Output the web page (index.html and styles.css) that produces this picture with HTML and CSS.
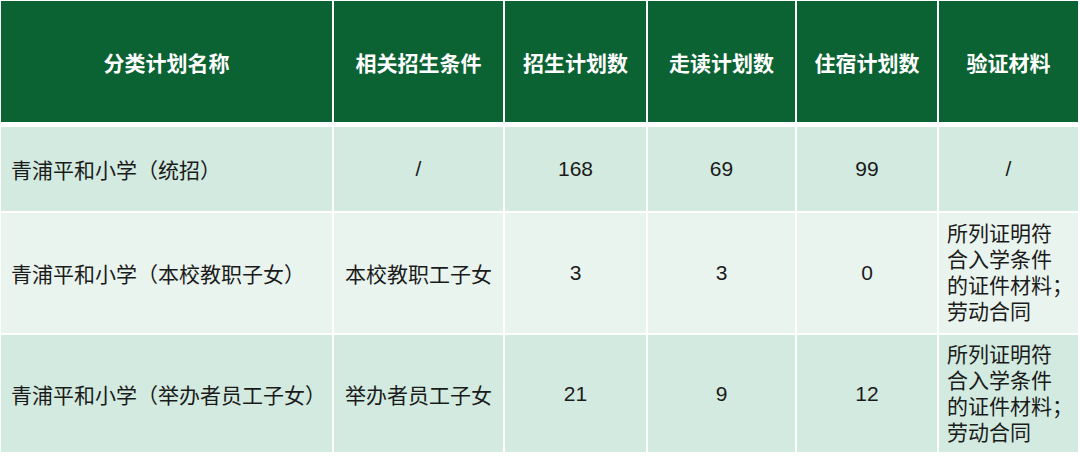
FILE: index.html
```html
<!DOCTYPE html>
<html lang="zh-CN">
<head>
<meta charset="utf-8">
<title>招生计划</title>
<link rel="stylesheet" href="styles.css">
</head>
<body>
<table class="plan">
  <colgroup>
    <col class="c1"><col class="c2"><col class="c3"><col class="c4"><col class="c5"><col class="c6">
  </colgroup>
  <thead>
    <tr class="head">
      <th>分类计划名称</th>
      <th>相关招生条件</th>
      <th>招生计划数</th>
      <th>走读计划数</th>
      <th>住宿计划数</th>
      <th>验证材料</th>
    </tr>
  </thead>
  <tbody>
    <tr class="row odd r1">
      <td class="name">青浦平和小学（统招）</td>
      <td>/</td>
      <td>168</td>
      <td>69</td>
      <td>99</td>
      <td>/</td>
    </tr>
    <tr class="row even r2">
      <td class="name">青浦平和小学（本校教职子女）</td>
      <td>本校教职工子女</td>
      <td>3</td>
      <td>3</td>
      <td>0</td>
      <td class="docs">所列证明符<br>合入学条件<br>的证件材料；<br>劳动合同</td>
    </tr>
    <tr class="row odd r3">
      <td class="name">青浦平和小学（举办者员工子女）</td>
      <td>举办者员工子女</td>
      <td>21</td>
      <td>9</td>
      <td>12</td>
      <td class="docs">所列证明符<br>合入学条件<br>的证件材料；<br>劳动合同</td>
    </tr>
  </tbody>
</table>
</body>
</html>
```
FILE: styles.css
```css
html, body {
  margin: 0;
  padding: 0;
  background: #ffffff;
}

.plan {
  margin: 1px 0 0 1px;
  width: 1077px;
  table-layout: fixed;
  border-collapse: separate;
  border-spacing: 0;
  font-family: "Liberation Sans", "Noto Sans CJK SC", sans-serif;
  font-size: 21px;
  color: #1b1b1b;
}

.c1 { width: 333px; }
.c2 { width: 171px; }
.c3 { width: 143px; }
.c4 { width: 149px; }
.c5 { width: 142px; }
.c6 { width: 139px; }

.plan th,
.plan td {
  box-sizing: border-box;
  padding: 0 6px;
  text-align: center;
  vertical-align: middle;
  border-right: 2px solid #ffffff;
  border-bottom: 2px solid #ffffff;
}

.plan th:last-child,
.plan td:last-child {
  border-right: none;
}

.head th {
  height: 126px;
  background: #0b6232;
  color: #ffffff;
  font-family: "Noto Sans CJK SC", sans-serif;
  font-weight: 700;
  font-size: 21px;
  border-bottom-width: 5px;
}

.odd td { background: #d2eadf; }
.even td { background: #eaf4ee; }

.r1 td { height: 86px; }
.r2 td { height: 122px; }
.r3 td { height: 117px; border-bottom: none; }

.plan td.name {
  text-align: left;
  padding-left: 10px;
}

.plan td.docs {
  text-align: left;
  padding: 0 0 0 8px;
  line-height: 26px;
}
```
